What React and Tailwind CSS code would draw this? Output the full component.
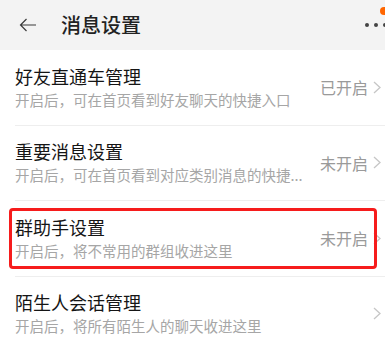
import React from "react";

const rows = [
  { title: "好友直通车管理", desc: "开启后，可在首页看到好友聊天的快捷入口", status: "已开启" },
  { title: "重要消息设置", desc: "开启后，可在首页看到对应类别消息的快捷...", status: "未开启" },
  { title: "群助手设置", desc: "开启后，将不常用的群组收进这里", status: "未开启", marked: true },
  { title: "陌生人会话管理", desc: "开启后，将所有陌生人的聊天收进这里", status: "" },
];

const Chevron = () => (
  <svg width="8" height="13" viewBox="0 0 8 13" fill="none">
    <polyline points="1,1 7,6.5 1,12" stroke="#c6c6c6" strokeWidth="1.3" />
  </svg>
);

const App = () => {
  return (
    <div className="w-[385px] h-[347px] overflow-hidden bg-white font-['Noto_Sans_CJK_SC',sans-serif]">
      {/* Header */}
      <div className="relative flex items-center h-[50px] bg-[#f3f3f3]">
        <div className="ml-[19px] w-[18px] flex items-center">
          <svg width="18" height="14" viewBox="0 0 18 14" fill="none">
            <path d="M17 7H1.5M7.5 1L1.5 7L7.5 13" stroke="#3a3a3a" strokeWidth="1.2" />
          </svg>
        </div>
        <div className="ml-[24px] text-[20px] leading-[26px] font-medium text-[#222]">消息设置</div>
        <div className="ml-auto mr-[-2px] flex items-center gap-[5px]">
          <span className="w-[4px] h-[4px] rounded-full bg-[#444]" />
          <span className="w-[4px] h-[4px] rounded-full bg-[#444]" />
          <span className="w-[4px] h-[4px] rounded-full bg-[#444]" />
        </div>
        <span className="absolute top-[7px] right-[-3px] w-[8px] h-[8px] rounded-full bg-[#ff6600]" />
      </div>

      {/* Rows */}
      {rows.map((row, i) => (
        <div key={i} className="relative">
          <div className="ml-[15px] h-[75.5px] border-b border-[#eeeeee] flex items-center pr-[4px]">
            <div className="flex-1 min-w-0 pt-[1px]">
              <div className="text-[18px] leading-[24px] text-[#151515]">{row.title}</div>
              <div className="text-[14.5px] leading-[24px] text-[#a6a6a6] whitespace-nowrap">{row.desc}</div>
            </div>
            <div className="flex items-center gap-[5px]">
              {row.status && <span className="text-[16px] text-[#9a9a9a]">{row.status}</span>}
              <Chevron />
            </div>
          </div>
          {row.marked && (
            <div className="absolute top-[7px] left-[9px] right-[8px] h-[61px] border-[3px] border-[#f61c1c] rounded-[4px]" />
          )}
        </div>
      ))}
    </div>
  );
};

export default App;
